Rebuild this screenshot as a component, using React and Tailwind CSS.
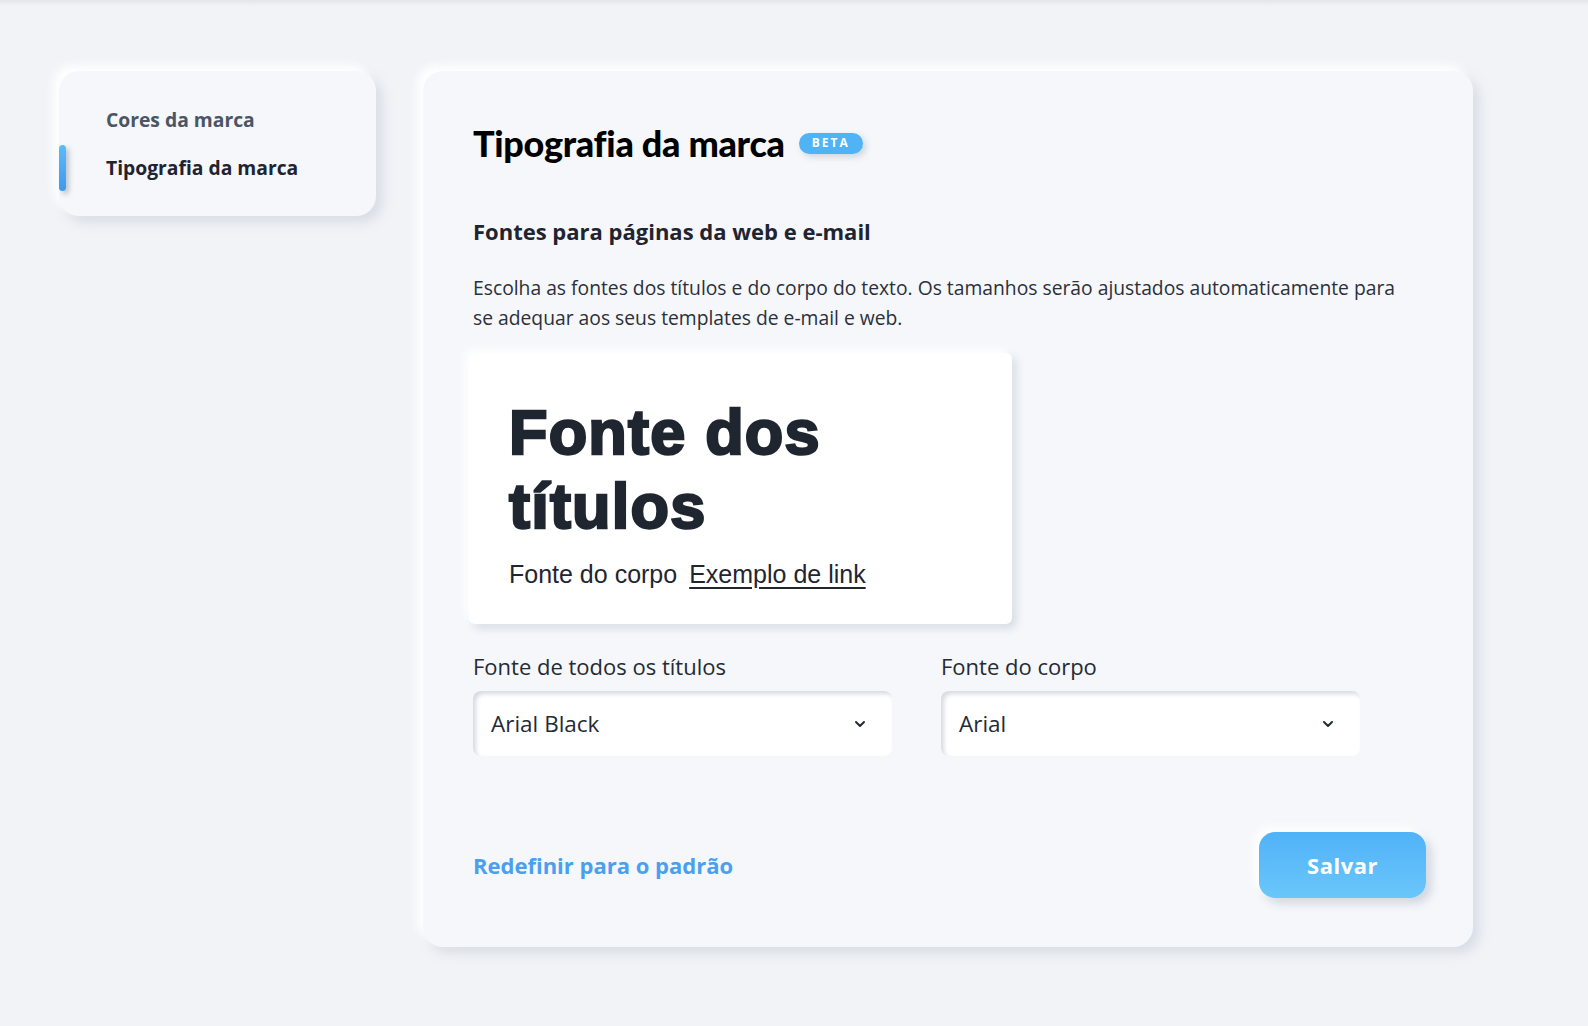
import { ChevronDown } from "lucide-react";

const sans = "font-['Open_Sans','Noto_Sans',sans-serif]";

function SideNav() {
  return (
    <nav className="w-[317px] h-[145px] shrink-0 rounded-[20px] bg-[#f5f7fa] shadow-[-6px_-6px_10px_#ffffff,6px_6px_12px_rgba(170,180,196,0.35)] pt-[35px]">
      <div className="relative pl-[47px] h-[28px] flex items-center">
        <span className="text-[19.3px] font-bold text-[#4b5563]">Cores da marca</span>
      </div>
      <div className="relative pl-[47px] h-[28px] mt-[20px] flex items-center">
        <div className="absolute left-0 top-[-9px] w-[7px] h-[46px] rounded-full bg-gradient-to-b from-[#5bbcf8] to-[#3f98ee] shadow-[3px_3px_5px_rgba(120,130,150,0.45)]" />
        <span className="text-[19.3px] font-bold text-[#1f2430]">Tipografia da marca</span>
      </div>
    </nav>
  );
}

function FontSelect({ label, value }) {
  return (
    <div className="w-[419px]">
      <div className="text-[22px] leading-[28px] text-[#252a33]">{label}</div>
      <div className="mt-[11px] h-[65px] rounded-[8px] bg-white shadow-[inset_3px_3px_4px_rgba(165,175,192,0.45)] flex items-center justify-between pl-[18px] pr-[24px]">
        <span className="text-[22.5px] text-[#252a33]">{value}</span>
        <ChevronDown size={16} strokeWidth={3} className="text-[#252a33]" />
      </div>
    </div>
  );
}

export default function App() {
  return (
    <div className={`min-h-screen bg-[#f1f3f7] ${sans}`}>
      <div className="h-[6px] bg-gradient-to-b from-[#e2e5ea] to-[#f1f3f7]" />
      <div className="flex items-start gap-[47px] pl-[59px] pt-[65px]">
        <SideNav />

        <main className="w-[1050px] rounded-[20px] bg-[#f5f7fa] shadow-[-6px_-6px_10px_#ffffff,6px_6px_12px_rgba(170,180,196,0.35)] pt-[50px] pb-[49px] pl-[50px] pr-[47px]">
          <div className="flex items-center h-[44px]">
            <h1 className="font-['Lato',sans-serif] text-[36px] font-black text-black tracking-[-0.3px]">Tipografia da marca</h1>
            <span className="ml-[14px] h-[21px] px-[13px] rounded-full bg-[#4fb3f6] text-white text-[12px] font-bold tracking-[2px] flex items-center shadow-[3px_3px_6px_rgba(160,170,190,0.45)]">
              BETA
            </span>
          </div>

          <h2 className="mt-[52px] text-[22px] leading-[28px] font-bold text-[#1f2430]">
            Fontes para páginas da web e e-mail
          </h2>

          <p className="mt-[28px] text-[19.3px] leading-[30px] text-[#2b303a] max-w-[940px]">
            Escolha as fontes dos títulos e do corpo do texto. Os tamanhos serão ajustados automaticamente para se adequar aos seus templates de e-mail e web.
          </p>

          <div className="mt-[20px] -ml-[4px] w-[543px] rounded-[6px] bg-white shadow-[-4px_-4px_8px_#ffffff,4px_4px_8px_rgba(165,175,192,0.4)] pt-[42px] pb-[35px] pl-[40px] pr-[30px] font-['Liberation_Sans','Arial',sans-serif]">
            <div className="text-[63px] leading-[74px] font-bold text-[#1f2630] tracking-[1.2px] [-webkit-text-stroke:2.5px_#1f2630]">
              Fonte dos
              <br />
              títulos
            </div>
            <div className="mt-[16px] text-[25px] leading-[30px] text-[#1f2630]">
              Fonte do corpo<span className="ml-[12px] underline underline-offset-[4px]">Exemplo de link</span>
            </div>
          </div>

          <div className="mt-[28px] flex gap-[49px]">
            <FontSelect label="Fonte de todos os títulos" value="Arial Black" />
            <FontSelect label="Fonte do corpo" value="Arial" />
          </div>

          <div className="mt-[76px] flex items-center justify-between">
            <a className="text-[22px] font-bold text-[#4a9ff0] cursor-pointer">Redefinir para o padrão</a>
            <button className="w-[167px] h-[66px] rounded-[16px] bg-gradient-to-b from-[#50b2f8] to-[#6ac7fa] text-white text-[22px] font-bold tracking-[0.5px] shadow-[-5px_-5px_10px_#ffffff,5px_5px_10px_rgba(160,170,190,0.45)]">
              Salvar
            </button>
          </div>
        </main>
      </div>
    </div>
  );
}
